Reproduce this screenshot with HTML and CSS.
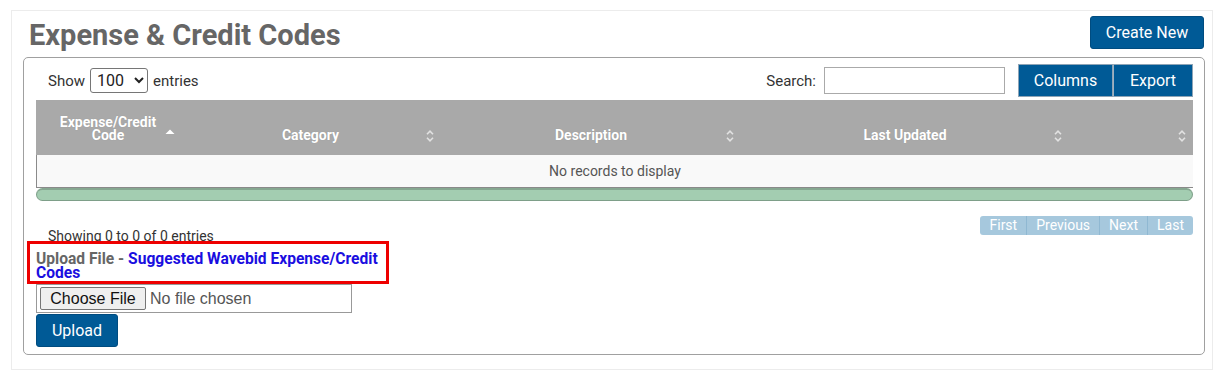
FILE: index.html
```html
<!DOCTYPE html>
<html lang="en">
<head>
<meta charset="utf-8">
<title>Expense &amp; Credit Codes</title>
<link rel="stylesheet" href="styles.css">
</head>
<body>
<div class="page">
  <div class="panel">
    <div class="panel-head">
      <h1 class="title">Expense &amp; Credit Codes</h1>
      <button class="btn btn-create" type="button">Create New</button>
    </div>
    <div class="box">
      <div class="toolbar">
        <label class="length">Show
          <select class="length-select">
            <option>10</option>
            <option>25</option>
            <option>50</option>
            <option selected>100</option>
          </select>
          entries</label>
        <div class="toolbar-right">
          <label class="search">Search: <input class="search-input" type="text"></label>
          <div class="btn-group">
            <button class="btn btn-grp" type="button">Columns</button>
            <button class="btn btn-grp btn-export" type="button">Export</button>
          </div>
        </div>
      </div>

      <div class="thead">
        <div class="th c1"><span></span><span class="th-text">Expense/Credit Code</span>
          <svg class="sort sort-asc" width="10" height="14" viewBox="0 0 10 14"><path d="M0.5 5 L5 0.5 L9.5 5 Z" fill="#ffffff"/></svg></div>
        <div class="th c2"><span></span><span class="th-text">Category</span>
          <svg class="sort" width="10" height="14" viewBox="0 0 10 14"><path d="M2 5.2 L5 2.2 L8 5.2 M2 8.8 L5 11.8 L8 8.8" fill="none" stroke="#e2e2e2" stroke-width="1.6"/></svg></div>
        <div class="th c3"><span></span><span class="th-text">Description</span>
          <svg class="sort" width="10" height="14" viewBox="0 0 10 14"><path d="M2 5.2 L5 2.2 L8 5.2 M2 8.8 L5 11.8 L8 8.8" fill="none" stroke="#e2e2e2" stroke-width="1.6"/></svg></div>
        <div class="th c4"><span></span><span class="th-text">Last Updated</span>
          <svg class="sort" width="10" height="14" viewBox="0 0 10 14"><path d="M2 5.2 L5 2.2 L8 5.2 M2 8.8 L5 11.8 L8 8.8" fill="none" stroke="#e2e2e2" stroke-width="1.6"/></svg></div>
        <div class="th c5"><span></span><span class="th-text"></span>
          <svg class="sort" width="10" height="14" viewBox="0 0 10 14"><path d="M2 5.2 L5 2.2 L8 5.2 M2 8.8 L5 11.8 L8 8.8" fill="none" stroke="#e2e2e2" stroke-width="1.6"/></svg></div>
      </div>
      <div class="empty-row">No records to display</div>
      <div class="scrollbar"></div>

      <div class="footer">
        <div class="info">Showing 0 to 0 of 0 entries</div>
        <div class="pager">
          <span class="pg pg-first">First</span><span class="pg">Previous</span><span class="pg">Next</span><span class="pg pg-last">Last</span>
        </div>
      </div>

      <div class="upload-label">Upload File - <a class="upload-link" href="#">Suggested Wavebid Expense/Credit Codes</a></div>
      <div class="file-field"><span class="file-btn">Choose File</span><span class="file-name">No file chosen</span></div>
      <button class="btn btn-upload" type="button">Upload</button>
    </div>
  </div>
</div>
</body>
</html>
```

FILE: styles.css
```css
* { box-sizing: border-box; }

body {
  margin: 0;
  background: #ffffff;
  font-family: Roboto, "Liberation Sans", Arial, sans-serif;
  color: #333;
}

.page {
  padding: 10px 0 0 11px;
}

.panel {
  width: 1202px;
  border: 1px solid #ececec;
  padding: 5px 7px 14px 11px;
}

.panel-head {
  display: flex;
  justify-content: space-between;
  align-items: flex-start;
}

.title {
  margin: 2px 0 5px 6px;
  font-size: 29px;
  line-height: 34px;
  font-weight: 700;
  color: #666666;
}

.btn {
  font-family: Roboto, "Liberation Sans", Arial, sans-serif;
  background: #005a96;
  color: #ffffff;
  border: 1px solid #004c80;
  cursor: pointer;
}

.btn-create {
  width: 114px;
  height: 33px;
  margin-right: 1px;
  border-radius: 3px;
  font-size: 16px;
  padding: 0;
}

.box {
  width: 1182px;
  border: 1px solid #a0a0a0;
  border-radius: 5px;
  padding: 6px 11px 7px 12px;
}

.toolbar {
  display: flex;
  justify-content: space-between;
  align-items: center;
  height: 33px;
}

.length {
  padding-left: 12px;
  font-size: 15px;
  color: #333;
  display: flex;
  align-items: center;
  gap: 5px;
}

.length-select {
  height: 25px;
  width: 58px;
  font-family: Roboto, "Liberation Sans", Arial, sans-serif;
  font-size: 16px;
  color: #222;
  border: 1px solid #767676;
  border-radius: 3px;
  background: #fff;
  padding: 0 2px;
}

.toolbar-right {
  display: flex;
  align-items: center;
  gap: 13px;
  height: 33px;
}

.search {
  font-size: 15px;
  color: #333;
  display: flex;
  align-items: center;
  gap: 8px;
}

.search-input {
  width: 181px;
  height: 27px;
  border: 1px solid #aaaaaa;
  margin: 0;
  padding: 0 4px;
}

.btn-group {
  display: flex;
  height: 33px;
}

.btn-grp {
  height: 33px;
  font-size: 16px;
  padding: 0;
  width: 95px;
  border: 1px solid #8ea4b6;
  border-radius: 0;
}

.btn-export {
  width: 80px;
  border-left: 1px solid #9fb1c0;
}

.thead {
  margin-top: 3px;
  display: grid;
  grid-template-columns: 144px 261px 300px 328px 124px;
  height: 55px;
  background: #a9a9a9;
}

.th {
  display: grid;
  grid-template-columns: 14px 1fr 14px;
  align-items: end;
  padding: 0 6px 13px 6px;
  color: #ffffff;
  font-size: 14px;
  font-weight: 700;
  line-height: 13px;
  text-align: center;
  text-shadow: 0 0 1px rgba(0, 0, 0, 0.15);
}

.th-text {
  display: block;
}

.c1 {
  padding: 0 4px 13px 4px;
  grid-template-columns: 12px 1fr 12px;
}

.sort {
  justify-self: end;
  display: block;
  margin-bottom: -1px;
}

.sort-asc {
  margin-right: 1px;
}

.empty-row {
  height: 33px;
  background: #f9f9f9;
  border-left: 1px solid #8a8a8a;
  border-bottom: 1px solid #8a8a8a;
  text-align: center;
  font-size: 14px;
  line-height: 32px;
  color: #555;
}

.scrollbar {
  height: 13px;
  background: #a3cdb1;
  border: 1px solid #7e9f89;
  border-top: 2px solid #86a891;
  border-radius: 7px;
}

.footer {
  margin-top: 15px;
  height: 25px;
  display: flex;
  justify-content: space-between;
  align-items: flex-start;
}

.info {
  padding: 10px 0 0 12px;
  font-size: 14px;
  line-height: 20px;
  color: #333;
}

.pager {
  display: flex;
  height: 19px;
}

.pg {
  background: #a6c8dd;
  color: #ffffff;
  font-size: 14px;
  line-height: 19px;
  padding: 0 9px;
  border-left: 1px solid #8fb8d2;
}

.pg-first {
  border-left: none;
  border-radius: 3px 0 0 3px;
}

.pg-last {
  border-radius: 0 3px 3px 0;
}

.upload-label {
  position: relative;
  margin-left: -9px;
  width: 362px;
  height: 43px;
  background: #ffffff;
  border: 3px solid #ee0000;
  padding: 8px 0 0 6px;
  font-size: 15.6px;
  font-weight: 700;
  line-height: 14px;
  color: #666666;
}

.upload-link {
  color: #1a0ee0;
  text-decoration: none;
}

.file-field {
  width: 316px;
  height: 29px;
  border: 1px solid #999;
  display: flex;
  align-items: center;
  padding-left: 3px;
  font-family: "Liberation Sans", Arial, sans-serif;
  font-size: 16px;
}

.file-btn {
  width: 106px;
  height: 23px;
  background: #efefef;
  border: 1px solid #767676;
  border-radius: 2px;
  color: #111;
  text-align: center;
  line-height: 21px;
}

.file-name {
  margin-left: 4px;
  color: #555;
}

.btn-upload {
  margin-top: 1px;
  width: 82px;
  height: 33px;
  border-radius: 3px;
  font-size: 16px;
  padding: 0;
  display: block;
}
```
